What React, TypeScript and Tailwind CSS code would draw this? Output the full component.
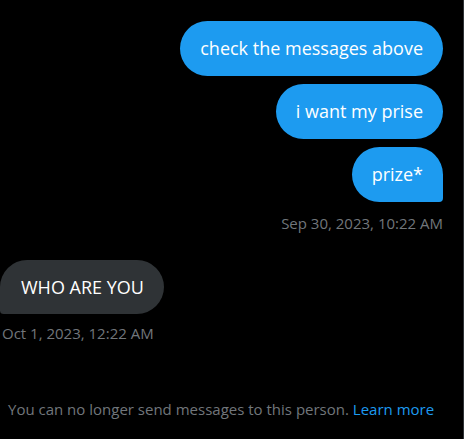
import { ReactElement } from "react"

const sent = ["check the messages above", "i want my prise", "prize*"]

const App = (): ReactElement => {
  return (
    <div
      className="flex h-[439px] w-[464px] flex-col border-r border-[#2f3336] bg-black"
      style={{ fontFamily: '"Segoe UI", "Open Sans", sans-serif' }}
    >
      <div className="flex flex-col items-end gap-2 pr-5 pt-[21px]">
        {sent.map((text, i) => (
          <div
            key={text}
            className={`h-[55px] flex items-center rounded-[28px] bg-[#1d9bf0] px-5 text-[18px] text-white ${
              i === sent.length - 1 ? "rounded-br-[4px]" : ""
            }`}
          >
            {text}
          </div>
        ))}
        <span className="mt-[3px] text-[15px] leading-5 text-[#71767b]">Sep 30, 2023, 10:22 AM</span>
      </div>
      <div className="mt-[27px] flex flex-col items-start">
        <div className="flex h-[54px] items-center rounded-[28px] rounded-bl-[4px] bg-[#2f3336] pl-[21px] pr-5 text-[18px] text-white">
          WHO ARE YOU
        </div>
        <span className="mt-[9px] pl-[2px] text-[15px] leading-5 text-[#71767b]">Oct 1, 2023, 12:22 AM</span>
      </div>
      <p className="mt-[55px] pl-2 text-[15px] text-[#71767b]">
        You can no longer send messages to this person.{" "}
        <span className="text-[#1d9bf0]">Learn more</span>
      </p>
    </div>
  )
}

export default App
